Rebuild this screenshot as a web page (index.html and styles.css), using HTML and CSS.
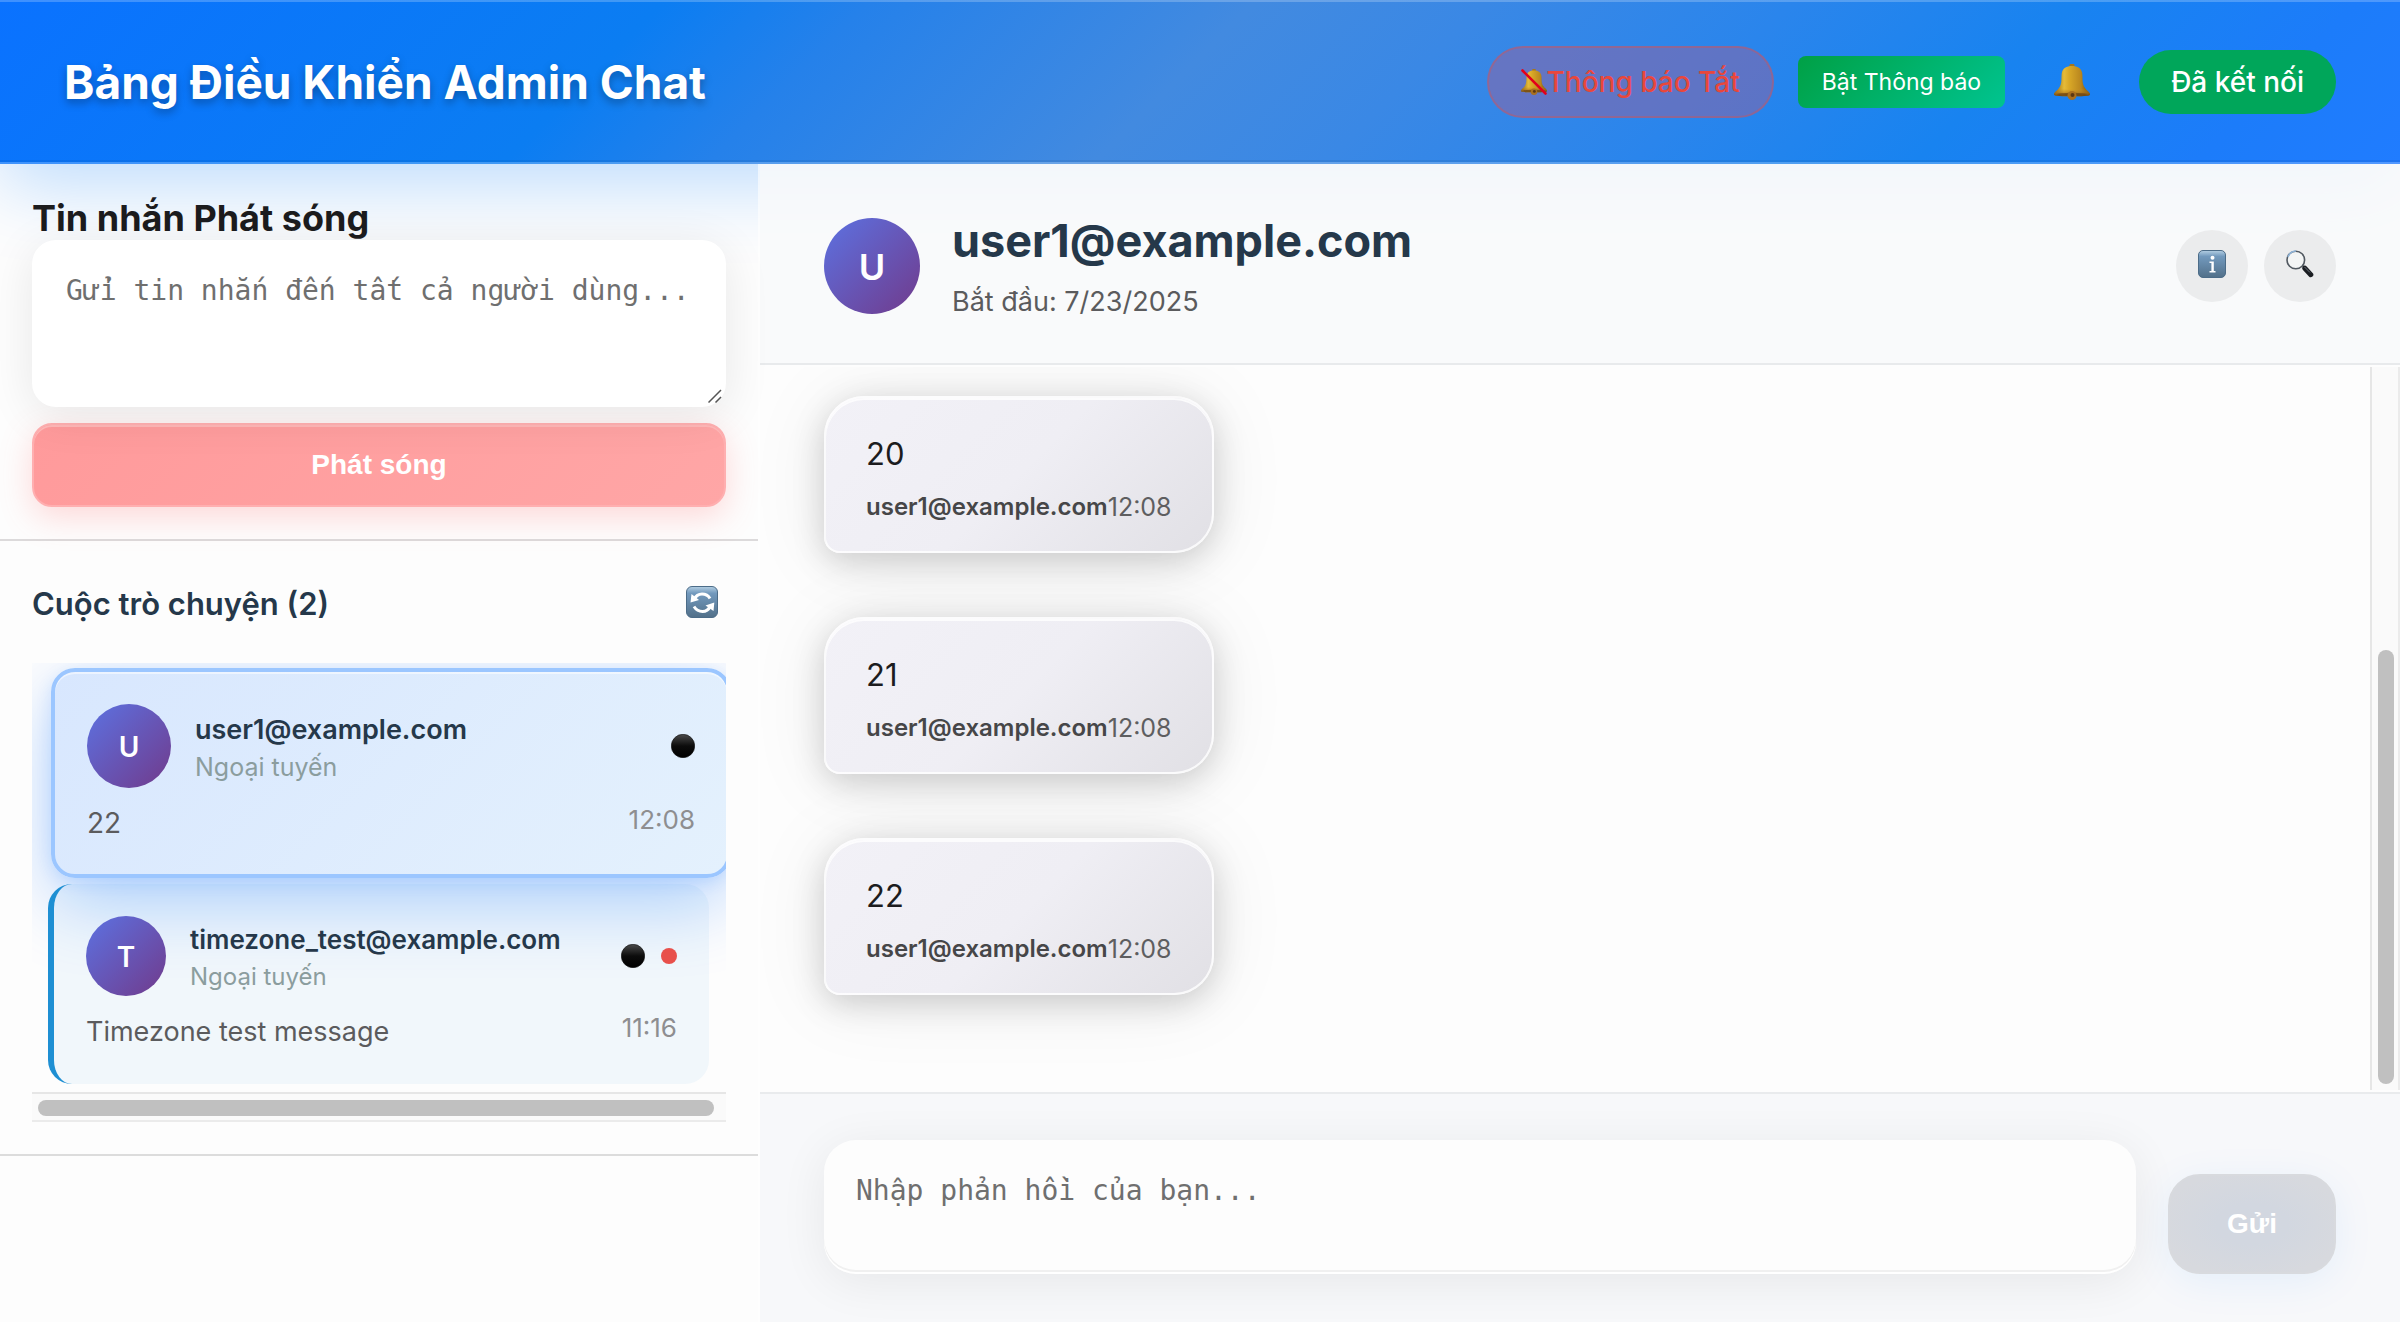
FILE: index.html
```html
<!DOCTYPE html>
<html lang="vi">
<head>
<meta charset="utf-8">
<meta name="viewport" content="width=device-width, initial-scale=1">
<title>Bảng Điều Khiển Admin Chat</title>
<link rel="stylesheet" href="styles.css">
</head>
<body>
<svg class="sprite" width="0" height="0" aria-hidden="true">
  <defs>
    <linearGradient id="brass" x1="0" x2="1" y1="0" y2="0">
      <stop offset="0" stop-color="#8a6412"/><stop offset=".28" stop-color="#e6bb38"/><stop offset=".42" stop-color="#d9a827"/><stop offset=".75" stop-color="#b8861f"/><stop offset="1" stop-color="#6e4b0c"/>
    </linearGradient>
    <linearGradient id="rim" x1="0" x2="0" y1="0" y2="1">
      <stop offset="0" stop-color="#d09a2e" stop-opacity="0"/><stop offset=".6" stop-color="#a86f1c" stop-opacity=".6"/><stop offset="1" stop-color="#5c3a10"/>
    </linearGradient>
    <linearGradient id="tile" x1="0" x2="0" y1="0" y2="1">
      <stop offset="0" stop-color="#b4cfe3"/><stop offset=".22" stop-color="#7299bd"/><stop offset="1" stop-color="#527089"/>
    </linearGradient>
    <linearGradient id="ball" x1="0" x2="0" y1="0" y2="1">
      <stop offset="0" stop-color="#4a4a4a"/><stop offset=".5" stop-color="#0c0c0c"/><stop offset="1" stop-color="#000"/>
    </linearGradient>
    <symbol id="bell" viewBox="0 0 36 36">
      <rect x="15.500" y="0" width="5" height="4" rx="1" fill="#a5761c"/>
      <path d="M18 2c-5.500 0-9.500 2.500-10.200 7C7 14 8.500 19 5 24 3 26.800 0 28.500 0 30.500c0 1 3 1.800 18 1.800s18-.8 18-1.800c0-2-3-3.700-5-6.500-3.500-5-2-10-2.800-15C27.500 4.500 23.500 2 18 2Z" fill="url(#brass)"/>
      <path d="M5 24C3 26.800 0 28.500 0 30.500c0 1 3 1.800 18 1.800s18-.8 18-1.800c0-2-3-3.700-5-6.500-5 2-21 2-26 0Z" fill="url(#rim)"/>
      <ellipse cx="18" cy="30" rx="15" ry="1.200" fill="#5f3b12" opacity=".6"/>
      <circle cx="18" cy="31.500" r="4.500" fill="#a9701f"/>
      <circle cx="18.500" cy="31" r="2" fill="#5b3713"/>
    </symbol>
    <symbol id="info" viewBox="0 0 28 28">
      <rect x=".5" y=".5" width="27" height="27" rx="4.500" fill="url(#tile)" stroke="#4c6c88"/>
      <circle cx="14.500" cy="7.800" r="2" fill="#fff"/>
      <path d="M11.500 11.500h4.300v9.500h1.700v1.500h-6V21h1.900v-8h-1.900Z" fill="#fff"/>
    </symbol>
    <symbol id="search" viewBox="0 0 28 28">
      <path d="M16.500 15.500 19 18" stroke="#777" stroke-width="2"/>
      <path d="m18.800 18.200 6 6.500" stroke="#1a1d22" stroke-width="5" stroke-linecap="round"/>
      <path d="m18.500 17 5.500 5.500" stroke="#6b727b" stroke-width="1"/>
      <circle cx="9.800" cy="10" r="8.800" fill="#f3f5f5" stroke="#505860" stroke-width="1.600"/>
      <path d="M2 7a8.800 8.800 0 0 1 8-6" fill="none" stroke="#8fb4d8" stroke-width="1.500"/>
    </symbol>
    <symbol id="refresh" viewBox="0 0 32 32">
      <rect x=".5" y=".5" width="31" height="31" rx="5.500" fill="url(#tile)" stroke="#4c6c88"/>
      <path d="M8 13.500C10 9.500 13 8 16 8c3.500 0 6.500 1.800 8 4.500" fill="none" stroke="#fff" stroke-width="3"/>
      <path d="M4.500 16.500 5.500 8l7.500 6Z" fill="#fff"/>
      <path d="M24.500 20C22.500 24 19.500 25.500 16.500 25.500c-3.500 0-6.500-1.800-8.500-5" fill="none" stroke="#fff" stroke-width="3"/>
      <path d="M28.300 16.500 27.500 25l-8-5.500Z" fill="#fff"/>
    </symbol>
    <symbol id="offline" viewBox="0 0 24 24">
      <circle cx="12" cy="12" r="11.700" fill="url(#ball)" stroke="#111" stroke-width=".6"/>
    </symbol>
  </defs>
</svg>

<div class="app">
  <header class="topbar">
    <h1 class="topbar-title">Bảng Điều Khiển Admin Chat</h1>
    <div class="topbar-tools">
      <div class="notice">
        <svg class="notice-icon" viewBox="0 0 26 26" aria-hidden="true"><use href="#bell" x="0" y="0" width="26" height="26"/><path d="m1.500 1.500 23 23" stroke="#e3001b" stroke-width="2.600" stroke-linecap="round"/></svg>
        <span>Thông báo Tắt</span>
      </div>
      <button class="enable" type="button">Bật Thông báo</button>
      <button class="bell" type="button" aria-label="Chuông"><svg width="36" height="36"><use href="#bell"/></svg></button>
      <div class="status">Đã kết nối</div>
    </div>
  </header>

  <div class="layout">
    <aside class="sidebar">
      <section class="broadcast">
        <h2 class="broadcast-title"><label for="broadcast">Tin nhắn Phát sóng</label></h2>
        <div class="broadcast-box">
          <textarea id="broadcast" class="broadcast-input" placeholder="Gửi tin nhắn đến tất cả người dùng..."></textarea>
          <svg class="grip" viewBox="0 0 14 14" aria-hidden="true"><path d="M.5 13.500 13 1M7.500 13.500 13 8" stroke="#555" stroke-width="1.500" fill="none"/></svg>
        </div>
        <button class="broadcast-send" type="button" disabled>Phát sóng</button>
      </section>

      <section class="chats">
        <div class="chats-head">
          <h3 class="chats-title">Cuộc trò chuyện (2)</h3>
          <button class="refresh" type="button" aria-label="Làm mới"><svg width="32" height="32"><use href="#refresh"/></svg></button>
        </div>
        <div class="chat-list">
          <article class="chat chat-active">
            <div class="chat-top">
              <div class="avatar">U</div>
              <div class="chat-who">
                <div class="chat-name">user1@example.com</div>
                <div class="chat-state">Ngoại tuyến</div>
              </div>
              <svg class="presence" aria-hidden="true"><use href="#offline"/></svg>
            </div>
            <div class="chat-bottom"><span class="chat-last">22</span><time class="chat-time">12:08</time></div>
          </article>
          <article class="chat chat-unread">
            <div class="chat-top">
              <div class="avatar">T</div>
              <div class="chat-who">
                <div class="chat-name">timezone_test@example.com</div>
                <div class="chat-state">Ngoại tuyến</div>
              </div>
              <svg class="presence" aria-hidden="true"><use href="#offline"/></svg>
              <span class="unread"></span>
            </div>
            <div class="chat-bottom"><span class="chat-last">Timezone test message</span><time class="chat-time">11:16</time></div>
          </article>
          <div class="rail-x"><div class="thumb-x"></div></div>
        </div>
      </section>
    </aside>

    <main class="room">
      <div class="room-head">
        <div class="avatar avatar-large">U</div>
        <div class="room-who">
          <h2 class="room-name">user1@example.com</h2>
          <p class="room-since">Bắt đầu: 7/23/2025</p>
        </div>
        <div class="room-actions">
          <button class="round" type="button" aria-label="Thông tin"><svg width="28" height="28"><use href="#info"/></svg></button>
          <button class="round" type="button" aria-label="Tìm kiếm"><svg width="28" height="28"><use href="#search"/></svg></button>
        </div>
      </div>

      <div class="room-body">
        <div class="messages">
          <div class="bubble"><p class="bubble-text">20</p><div class="bubble-meta"><strong class="bubble-from">user1@example.com</strong><time class="bubble-time">12:08</time></div></div>
          <div class="bubble"><p class="bubble-text">21</p><div class="bubble-meta"><strong class="bubble-from">user1@example.com</strong><time class="bubble-time">12:08</time></div></div>
          <div class="bubble"><p class="bubble-text">22</p><div class="bubble-meta"><strong class="bubble-from">user1@example.com</strong><time class="bubble-time">12:08</time></div></div>
        </div>
        <div class="rail-y"><div class="thumb-y"></div></div>
      </div>

      <form class="composer">
        <textarea class="composer-input" aria-label="Phản hồi" placeholder="Nhập phản hồi của bạn..."></textarea>
        <button class="composer-send" type="submit" disabled>Gửi</button>
      </form>
    </main>
  </div>
</div>
</body>
</html>
```

FILE: styles.css
```css
* { box-sizing: border-box; }

body {
  margin: 0;
  font-family: Inter, "Noto Sans", sans-serif;
  font-size: 28px;
  color: #1c1c1e;
  background: #fdfdfd;
}

h1, h2, h3, p { margin: 0; }
button { border: 0; margin: 0; font: inherit; }
svg { display: block; flex: none; }
.sprite { position: absolute; }

.app {
  display: flex;
  flex-direction: column;
  min-height: 100vh;
}

/* Top bar */
.topbar {
  display: flex;
  align-items: center;
  justify-content: space-between;
  padding: 44px 64px;
  border-top: 2px solid rgba(255, 255, 255, .22);
  border-bottom: 2px solid rgba(255, 255, 255, .22);
  background: linear-gradient(135deg, #0a72ff 0%, #0b7df2 26%, #2581ea 34%, #428ae0 49%, #3a88e5 58%, #2a85ec 70%, #1883f0 81%, #1c7cfa 92%, #207cff 100%) border-box;
  box-shadow: 0 20px 76px rgba(0, 122, 255, .26), inset 0 -2px 0 rgba(0, 0, 0, .06);
}
.topbar-title {
  font-size: 46px;
  line-height: 58px;
  font-weight: 700;
  color: #fff;
  text-shadow: 0 4px 8px rgba(0, 0, 0, .3);
}
.topbar-tools { display: flex; align-items: center; gap: 24px; }
.notice {
  display: flex;
  align-items: center;
  padding: 0 32px;
  height: 72px;
  border: 2px solid rgba(231, 76, 60, .35);
  border-radius: 40px;
  background: rgba(160, 96, 150, .45);
  color: #e8473c;
  font-size: 28px;
  font-weight: 500;
}
.notice-icon { width: 26px; height: 26px; }
.enable {
  padding: 0 24px;
  height: 52px;
  border-radius: 8px;
  background: linear-gradient(135deg, #00a045, #00c490);
  color: #fff;
  font-size: 23px;
}
.bell { padding: 16px 25px; background: none; }
.status {
  padding: 0 32px;
  border-radius: 32px;
  background: #00a65a;
  color: #fff;
  font-size: 28px;
  line-height: 64px;
  font-weight: 500;
}

.layout {
  flex: 1;
  display: grid;
  grid-template-columns: 760px 1fr;
}

/* Sidebar */
.sidebar { border-right: 2px solid rgba(255, 255, 255, .6); }
.broadcast {
  padding: 32px;
  border-bottom: 2px solid #dcdadb;
}
.broadcast-title { font-size: 36px; line-height: 44px; font-weight: 700; }
.broadcast-box { position: relative; margin-bottom: 16px; }
textarea {
  display: block;
  width: 100%;
  border: 0;
  resize: none;
  outline: 0;
  font: 28px/34px "DejaVu Sans Mono", monospace;
}
textarea::placeholder { color: #6f6f6f; opacity: 1; }
.broadcast-input {
  height: 167px;
  padding: 34px;
  border-radius: 24px;
  background: #fff;
  box-shadow: 0 8px 48px rgba(0, 0, 0, .09);
}
.grip { position: absolute; right: 4px; bottom: 4px; width: 14px; height: 14px; }
.broadcast-send {
  display: block;
  width: 100%;
  height: 84px;
  border: 2px solid #ffafb0;
  border-radius: 20px;
  background: linear-gradient(135deg, #ff9a9b, #ffa6a6);
  box-shadow: 0 10px 32px rgba(255, 107, 107, .25), inset 0 2px 0 #ffb8b8;
  color: #fff;
  font: 700 28px/34px "Liberation Sans", sans-serif;
}

.chats { padding: 32px; border-bottom: 2px solid #dcdcdc; }
.chats-head {
  display: flex;
  align-items: center;
  justify-content: space-between;
  height: 58px;
  padding-right: 8px;
  margin-bottom: 32px;
}
.chats-title { padding-top: 4px; font-size: 31px; line-height: 40px; font-weight: 600; color: #25384a; }
.refresh { padding: 0; background: none; }
.chat-list { padding-top: 5px; overflow: hidden; }

.chat { border-radius: 24px; padding: 32px; }
.chat-active {
  width: 680px;
  margin: 0 0 6px 19px;
  border: 4px solid #9bc6ff;
  background: linear-gradient(135deg, #d8e7fe, #e4f1fd);
  box-shadow: 0 24px 72px rgba(0, 110, 255, .3), 0 4px 16px rgba(0, 110, 255, .12), inset 0 2px 0 rgba(255, 255, 255, .5);
}
.chat-unread {
  width: 661px;
  margin: 0 0 8px 16px;
  border-left: 6px solid #1e8fd3;
  background: rgba(52, 152, 219, .06);
}
.chat-top { display: flex; align-items: center; gap: 16px; margin-bottom: 16px; }
.chat-who { flex: 1; padding: 3px 0 0 8px; }
.avatar {
  flex: none;
  width: 80px;
  height: 80px;
  border-radius: 50%;
  background: linear-gradient(135deg, #5c72e2, #713a8b);
  color: #fff;
  font-size: 28px;
  line-height: 82px;
  font-weight: 600;
  text-align: center;
}
.chat-name { font-size: 26px; line-height: 38px; font-weight: 600; color: #25384a; }
.chat-state { font-size: 24px; line-height: 36px; color: #8b9d9e; }
.presence { width: 24px; height: 24px; }
.unread { width: 16px; height: 16px; border-radius: 50%; background: #e8504b; }
.chat-bottom { display: flex; justify-content: space-between; align-items: flex-start; }
.chat-last { font-size: 27px; line-height: 40px; color: #5b5b5d; }
.chat-time { font-size: 26px; line-height: 32px; color: #8e8e90; }
.chat-active .avatar { width: 84px; height: 84px; line-height: 86px; }
.chat-active .chat-name { font-size: 27px; }
.chat-active .chat-state { font-size: 25px; }
.chat-active .chat-last { font-size: 28px; line-height: 38px; }

.rail-x {
  height: 30px;
  padding: 6px 12px 6px 6px;
  border-top: 2px solid #e6e6e6;
  border-bottom: 2px solid #ebebeb;
  background: #fafafa;
}
.thumb-x { height: 16px; border-radius: 8px; background: #c0c0c0; }

/* Conversation */
.room { display: flex; flex-direction: column; min-width: 0; }
.room-head {
  display: flex;
  align-items: center;
  padding: 48px 64px 43px;
  border-bottom: 2px solid #e8eaec;
  background: rgba(248, 249, 251, .88);
}
.avatar-large { width: 96px; height: 96px; font-size: 36px; line-height: 98px; margin-right: 32px; }
.room-who { flex: 1; }
.room-name { font-size: 45px; line-height: 58px; font-weight: 700; color: #25384a; margin-bottom: 14px; }
.room-since { font-size: 27px; line-height: 36px; color: #5b5b5d; }
.room-actions { display: flex; gap: 16px; }
.round {
  display: grid;
  place-items: center;
  width: 72px;
  height: 72px;
  padding: 0 0 4px;
  border-radius: 50%;
  background: #ebeced;
}

.room-body { flex: 1; display: flex; padding: 2px 0; }
.messages {
  flex: 1;
  display: flex;
  flex-direction: column;
  justify-content: flex-end;
  align-items: flex-start;
  gap: 64px;
  padding: 0 64px 95px;
  overflow: hidden;
}
.bubble {
  padding: 32px 40px 27px;
  border: 2px solid rgba(255, 255, 255, .8);
  border-radius: 40px 40px 40px 16px;
  background: linear-gradient(135deg, #f2f1f7 0%, #efeef4 50%, #e1e0e5 100%);
  box-shadow: 0 8px 32px rgba(0, 0, 0, .17), 0 4px 80px rgba(0, 0, 0, .08), inset 0 2px 0 rgba(255, 255, 255, .8);
}
.bubble-text { font-size: 31px; line-height: 48px; margin-bottom: 12px; }
.bubble-meta { display: flex; font-size: 24px; line-height: 34px; color: #5e5e60; }
.bubble-from { font-weight: 600; color: #464648; }
.bubble-time { font-size: 25px; }
.rail-y {
  width: 30px;
  display: flex;
  flex-direction: column;
  justify-content: flex-end;
  padding: 6px 4px 6px 6px;
  border-left: 2px solid #e6e6e6;
  border-right: 2px solid #ebebeb;
  background: #fafafa;
}
.thumb-y { width: 16px; height: 61%; border-radius: 8px; background: #c0c0c0; }

.composer {
  display: flex;
  align-items: flex-end;
  gap: 32px;
  padding: 46px 64px 48px;
  border-top: 2px solid #e9ebed;
  background: #f7f8fa;
}
.composer-input {
  flex: 1;
  height: 134px;
  padding: 34px 32px;
  border-radius: 32px;
  background: #fdfdfd;
  box-shadow: 0 8px 48px rgba(0, 0, 0, .07), inset 0 -2px 0 #fff, inset 0 -4px 0 #f0f0f0;
}
.composer-send {
  width: 168px;
  height: 100px;
  border: 2px solid #d8dade;
  border-radius: 32px;
  background: radial-gradient(ellipse, #d2d7e0 30%, #d7d9de 80%);
  box-shadow: 0 8px 40px rgba(0, 122, 255, .08);
  color: #fff;
  font: 700 28px/34px "Liberation Sans", sans-serif;
}
```
